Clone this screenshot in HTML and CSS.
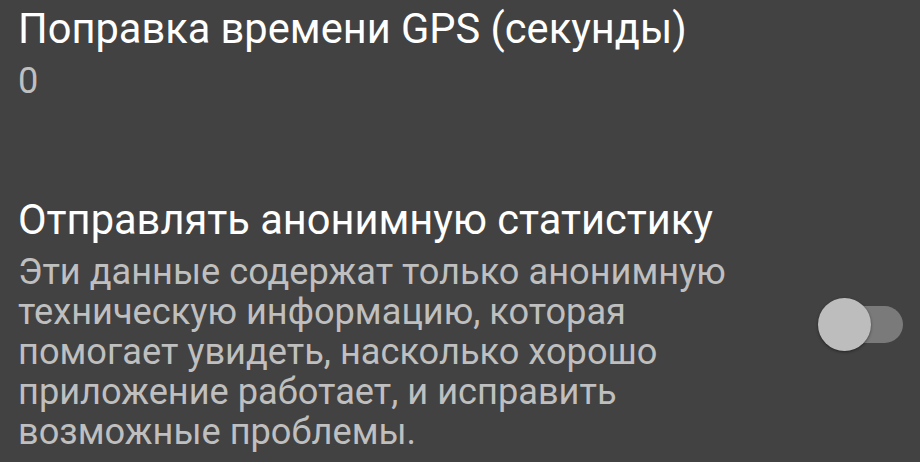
FILE: index.html
```html
<!DOCTYPE html>
<html lang="ru">
<head>
<meta charset="utf-8">
<link rel="stylesheet" href="styles.css">
</head>
<body>
<div class="screen">
  <div class="pref">
    <div class="pref-text">
      <div class="pref-title">Поправка времени GPS (секунды)</div>
      <div class="pref-summary">0</div>
    </div>
  </div>
  <div class="pref pref-switch">
    <div class="pref-text">
      <div class="pref-title">Отправлять анонимную статистику</div>
      <div class="pref-summary">Эти данные содержат только анонимную техническую информацию, которая помогает увидеть, насколько хорошо приложение работает, и исправить возможные проблемы.</div>
    </div>
    <div class="switch">
      <div class="switch-track"></div>
      <div class="switch-thumb"></div>
    </div>
  </div>
</div>
</body>
</html>
```

FILE: styles.css
```css
html, body {
  margin: 0;
  padding: 0;
  background: #424242;
}
.screen {
  width: 920px;
  height: 462px;
  overflow: hidden;
  background: #424242;
  font-family: Roboto, "Noto Sans", sans-serif;
  display: flex;
  flex-direction: column;
  padding-top: 5px;
  box-sizing: border-box;
}
.pref {
  display: flex;
  align-items: center;
  padding: 0 17px 0 18px;
}
.pref-switch {
  margin-top: 95px;
}
.pref-text {
  flex: 1;
  min-width: 0;
}
.pref-title {
  color: #ffffff;
  font-size: 41.6px;
  line-height: 48px;
  margin-bottom: 8px;
}
.pref-summary {
  color: #bfbfbf;
  font-size: 36.2px;
  line-height: 40px;
}
.switch {
  position: relative;
  width: 85px;
  height: 53px;
  margin-left: 70px;
  flex: none;
}
.switch-track {
  position: absolute;
  left: 2px;
  right: 0;
  top: 8px;
  height: 37px;
  border-radius: 19px;
  background: #7a7a7a;
}
.switch-thumb {
  position: absolute;
  left: 0;
  top: 0;
  width: 53px;
  height: 53px;
  border-radius: 50%;
  background: #bdbdbd;
  box-shadow: 0 1px 3px rgba(0, 0, 0, 0.45);
}
```
